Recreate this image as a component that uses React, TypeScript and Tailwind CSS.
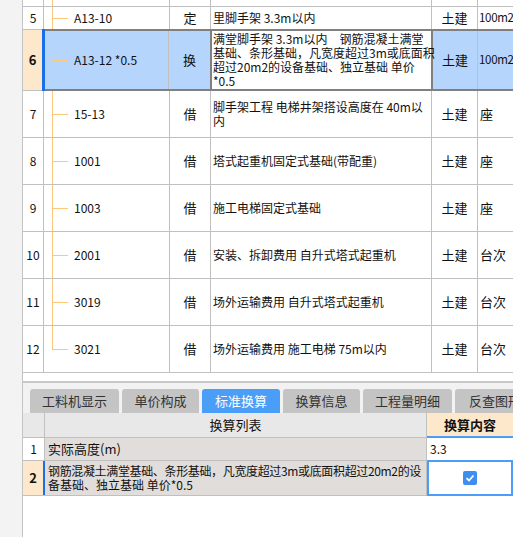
import React from 'react'

type Row = {
  n: string
  code: string
  type: string
  name: string[]
  unit: string
  last?: boolean
}

const rows: Row[] = [
  { n: '7', code: '15-13', type: '借', name: ['脚手架工程 电梯井架搭设高度在 40m以', '内'], unit: '座' },
  { n: '8', code: '1001', type: '借', name: ['塔式起重机固定式基础(带配重)'], unit: '座' },
  { n: '9', code: '1003', type: '借', name: ['施工电梯固定式基础'], unit: '座' },
  { n: '10', code: '2001', type: '借', name: ['安装、拆卸费用 自升式塔式起重机'], unit: '台次' },
  { n: '11', code: '3019', type: '借', name: ['场外运输费用 自升式塔式起重机'], unit: '台次' },
  { n: '12', code: '3021', type: '借', name: ['场外运输费用 施工电梯 75m以内'], unit: '台次', last: true },
]

const tabs = [
  { label: '工料机显示', w: 'w-[89px]' },
  { label: '单价构成', w: 'w-[77px]' },
  { label: '标准换算', w: 'w-[78px]', active: true },
  { label: '换算信息', w: 'w-[77px]' },
  { label: '工程量明细', w: 'w-[89px]' },
  { label: '反查图形', w: 'w-[80px]' },
]

// orange tree connector in the code column
function Tree({ mode }: { mode: 'full' | 'end' | 'line' }) {
  return (
    <>
      {mode !== 'end' && <div className="absolute left-[8px] top-0 bottom-0 w-px bg-[#fcc97c]" />}
      {mode === 'end' && <div className="absolute left-[8px] top-0 h-1/2 w-px bg-[#fcc97c]" />}
      {mode !== 'line' && <div className="absolute left-[8px] top-1/2 w-[16px] h-px bg-[#fcc97c]" />}
    </>
  )
}

function DataRow({ r }: { r: Row }) {
  return (
    <div className="flex h-[47px] border-b border-[#c0c0c0]">
      <div className="w-[21px] shrink-0 border-r border-[#c0c0c0] flex items-center justify-center">{r.n}</div>
      <div className="relative w-[126px] shrink-0 border-r border-[#c0c0c0] flex items-center pl-[30px]">
        <Tree mode={r.last ? 'end' : 'full'} />
        {r.code}
      </div>
      <div className="w-[41px] shrink-0 border-r border-[#c0c0c0] flex items-center justify-center text-[13px]">{r.type}</div>
      <div className="w-[221px] shrink-0 border-r border-[#c0c0c0] flex flex-col justify-center pl-[2px] leading-[14px]">
        {r.name.map((l) => (
          <span key={l} className="whitespace-nowrap">{l}</span>
        ))}
      </div>
      <div className="w-[46px] shrink-0 border-r border-[#c0c0c0] flex items-center justify-center text-[13px]">土建</div>
      <div className="flex-1 flex items-center pl-[2px] text-[13px]">{r.unit}</div>
    </div>
  )
}

export default function App() {
  return (
    <div className="flex w-[513px] h-[537px] overflow-hidden bg-white text-[12px] text-[#111] font-['Noto_Sans_CJK_SC',sans-serif]">
      <div className="w-[22px] shrink-0 bg-[#f3f3f3]" />
      <div className="flex-1 flex flex-col border-l border-[#c4c4c4] min-w-0">
        {/* upper grid */}
        <div className="flex flex-col">
          <div className="flex h-[7px] border-b border-[#c0c0c0]">
            <div className="w-[21px] shrink-0 border-r border-[#c0c0c0]" />
            <div className="relative w-[126px] shrink-0 border-r border-[#c0c0c0]">
              <Tree mode="line" />
            </div>
            <div className="w-[41px] shrink-0 border-r border-[#c0c0c0]" />
            <div className="w-[221px] shrink-0 border-r border-[#c0c0c0]" />
            <div className="w-[46px] shrink-0 border-r border-[#c0c0c0]" />
            <div className="flex-1" />
          </div>

          <div className="flex h-[22px]">
            <div className="w-[21px] shrink-0 border-r border-[#c0c0c0] flex items-center justify-center">5</div>
            <div className="relative w-[126px] shrink-0 border-r border-[#c0c0c0] flex items-center pl-[30px]">
              <Tree mode="full" />
              A13-10
            </div>
            <div className="w-[41px] shrink-0 border-r border-[#c0c0c0] flex items-center justify-center text-[13px]">定</div>
            <div className="w-[221px] shrink-0 border-r border-[#c0c0c0] flex items-center pl-[2px] whitespace-nowrap">
              里脚手架 3.3m以内
            </div>
            <div className="w-[46px] shrink-0 border-r border-[#c0c0c0] flex items-center justify-center text-[13px]">土建</div>
            <div className="flex-1 flex items-center pl-[1px] text-[11.5px] tracking-[-0.3px] whitespace-nowrap">100m2</div>
          </div>

          {/* selected row */}
          <div className="flex h-[62px]">
            <div className="w-[19px] shrink-0 bg-[#fde8cc] border-y border-[#c0c0c0] flex items-center justify-center font-bold text-[13px]">6</div>
            <div className="w-[3px] shrink-0 bg-[#1a6fe8]" />
            <div className="flex-1 flex border-y-2 border-[#808080] bg-[#b5d5fd]">
              <div className="relative w-[124px] shrink-0 border-r border-[#c0c0c0] flex items-center pl-[29px]">
                <div className="absolute left-[7px] top-1/2 w-[16px] h-px bg-[#fcc97c]" />
                A13-12 *0.5
              </div>
              <div className="w-[41px] shrink-0 flex items-center justify-center text-[13px]">换</div>
              <div className="w-[223px] shrink-0 bg-white border-x-2 border-[#808080] flex flex-col justify-center pl-[1px] leading-[14px]">
                <span className="whitespace-nowrap">满堂脚手架 3.3m以内　钢筋混凝土满堂</span>
                <span className="whitespace-nowrap">基础、条形基础，凡宽度超过3m或底面积</span>
                <span className="whitespace-nowrap">超过20m2的设备基础、独立基础 单价</span>
                <span className="whitespace-nowrap">*0.5</span>
              </div>
              <div className="w-[45px] shrink-0 border-r border-[#c0c0c0] flex items-center justify-center text-[13px]">土建</div>
              <div className="flex-1 flex items-center pl-[1px] text-[11.5px] tracking-[-0.3px] whitespace-nowrap">100m2</div>
            </div>
          </div>

          {rows.map((r) => (
            <DataRow key={r.n} r={r} />
          ))}
        </div>

        <div className="h-[8px] shrink-0" />
        <div className="h-[2px] shrink-0 bg-[#c8c8c8]" />

        {/* tabs */}
        <div className="flex items-end gap-[3px] h-[30px] shrink-0 bg-[#f2f2f2] pl-[7px]">
          {tabs.map((t) => (
            <div
              key={t.label}
              className={`${t.w} shrink-0 h-[24px] rounded-t-[3px] flex items-center justify-center text-[13px] whitespace-nowrap overflow-hidden ${
                t.active ? 'bg-[#4a9ef8] text-white' : 'bg-[#c4c4c4] text-[#333]'
              }`}
            >
              {t.label}
            </div>
          ))}
        </div>

        {/* lower grid */}
        <div className="flex flex-col">
          <div className="flex h-[25px] border-b border-[#c0c0c0] bg-[#e8e8e8]">
            <div className="w-[22px] shrink-0 border-r border-[#c0c0c0]" />
            <div className="w-[382px] shrink-0 border-r border-[#c0c0c0] flex items-center justify-center text-[13px]">换算列表</div>
            <div className="flex-1 bg-[#fde8cc] border-b-2 border-[#4a9ef8] -mb-px flex items-center justify-center font-bold text-[13px]">换算内容</div>
          </div>
          <div className="flex h-[23px] border-b border-[#c0c0c0]">
            <div className="w-[22px] shrink-0 border-r border-[#c0c0c0] bg-white flex items-center justify-center">1</div>
            <div className="w-[382px] shrink-0 border-r border-[#c0c0c0] bg-[#e1dddb] flex items-center pl-[3px] text-[13px]">实际高度(m)</div>
            <div className="flex-1 bg-white flex items-center pl-[3px]">3.3</div>
          </div>
          <div className="flex h-[35px] border-b border-[#c0c0c0]">
            <div className="w-[20px] shrink-0 bg-[#fde8cc] flex items-center justify-center font-bold text-[13px]">2</div>
            <div className="w-[2px] shrink-0 bg-[#1a6fe8]" />
            <div className="w-[382px] shrink-0 border-r border-[#c0c0c0] bg-[#e1dddb] flex flex-col justify-center pl-[3px] leading-[14px] overflow-hidden">
              <span className="whitespace-nowrap tracking-[-0.35px]">钢筋混凝土满堂基础、条形基础，凡宽度超过3m或底面积超过20m2的设</span>
              <span className="whitespace-nowrap">备基础、独立基础 单价*0.5</span>
            </div>
            <div className="flex-1 -mt-px h-[36px] border-2 border-[#4a9ef8] bg-white flex items-center justify-center">
              <div className="w-[14px] h-[14px] rounded-[2px] bg-[#3d8ef0] flex items-center justify-center">
                <svg width="10" height="10" viewBox="0 0 10 10">
                  <path d="M1.5 5.2 L4 7.5 L8.5 2.5" fill="none" stroke="white" strokeWidth="1.8" />
                </svg>
              </div>
            </div>
          </div>
        </div>
      </div>
    </div>
  )
}
